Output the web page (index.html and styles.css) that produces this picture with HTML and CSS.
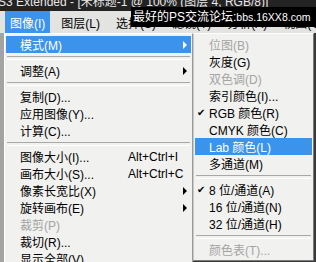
FILE: index.html
```html
<!DOCTYPE html>
<html lang="zh-CN">
<head>
    <meta charset="UTF-8">
    <title>图像 - 模式</title>
    <link rel="stylesheet" href="styles.css">
</head>
<body>
    <div class="titlebar">
        <span class="title-text">S3 Extended - [未标题-1 @ 100% (图层 4, RGB/8)]</span>
    </div>

    <div class="menubar">
        <span class="top-item active">图像(I)</span>
        <span class="top-item">图层(L)</span>
        <span class="top-item">选择(S)</span>
        <span class="top-item">滤镜(T)</span>
        <span class="top-item">分析(A)</span>
        <span class="top-item">视图(V)</span>
        <span class="top-item">窗口(W)</span>
    </div>

    <div class="watermark">最好的PS交流论坛:<span class="url">bbs.16XX8.com</span></div>

    <div class="workspace">
        <div class="gutter"></div>

        <div class="menu">
            <div class="item hover"><span class="label">模式(M)</span><span class="arrow"></span></div>
            <div class="sep"></div>
            <div class="item"><span class="label">调整(A)</span><span class="arrow"></span></div>
            <div class="sep"></div>
            <div class="item"><span class="label">复制(D)...</span></div>
            <div class="item"><span class="label">应用图像(Y)...</span></div>
            <div class="item"><span class="label">计算(C)...</span></div>
            <div class="sep"></div>
            <div class="item"><span class="label">图像大小(I)...</span><span class="key">Alt+Ctrl+I</span></div>
            <div class="item"><span class="label">画布大小(S)...</span><span class="key">Alt+Ctrl+C</span></div>
            <div class="item"><span class="label">像素长宽比(X)</span><span class="arrow"></span></div>
            <div class="item"><span class="label">旋转画布(E)</span><span class="arrow"></span></div>
            <div class="item disabled"><span class="label">裁剪(P)</span></div>
            <div class="item"><span class="label">裁切(R)...</span></div>
            <div class="item"><span class="label">显示全部(V)</span></div>
        </div>

        <div class="submenu">
            <div class="sub-item disabled"><span class="check"></span>位图(B)</div>
            <div class="sub-item"><span class="check"></span>灰度(G)</div>
            <div class="sub-item disabled"><span class="check"></span>双色调(D)</div>
            <div class="sub-item"><span class="check"></span>索引颜色(I)...</div>
            <div class="sub-item"><span class="check">✔</span>RGB 颜色(R)</div>
            <div class="sub-item"><span class="check"></span>CMYK 颜色(C)</div>
            <div class="sub-item hover"><span class="check"></span>Lab 颜色(L)</div>
            <div class="sub-item"><span class="check"></span>多通道(M)</div>
            <div class="sep"></div>
            <div class="sub-item"><span class="check">✔</span>8 位/通道(A)</div>
            <div class="sub-item"><span class="check"></span>16 位/通道(N)</div>
            <div class="sub-item"><span class="check"></span>32 位/通道(H)</div>
            <div class="sep"></div>
            <div class="sub-item disabled"><span class="check"></span>颜色表(T)...</div>
        </div>
    </div>
</body>
</html>
```

FILE: styles.css
```css
* {
    margin: 0;
    padding: 0;
    box-sizing: border-box;
}

body {
    width: 316px;
    height: 262px;
    overflow: hidden;
    position: relative;
    background: #3a3a3a;
    font-family: "Liberation Sans", "Noto Sans CJK SC", sans-serif;
    font-size: 12px;
    color: #000;
}

.titlebar {
    height: 11px;
    background: #232323;
    overflow: hidden;
    white-space: nowrap;
}

.title-text {
    display: block;
    margin-top: -6px;
    margin-left: -2px;
    line-height: 16px;
    color: #e8e8e8;
    font-size: 12px;
}

.menubar {
    height: 22px;
    background: #e3e3e1;
    display: flex;
    align-items: stretch;
    padding-left: 5px;
    white-space: nowrap;
    overflow: hidden;
}

.top-item {
    display: flex;
    align-items: center;
    padding: 0 5px;
    margin-right: 6px;
}

.top-item.active {
    background: #3b93ec;
    color: #fff;
}

/* forum watermark pasted over the screenshot */
.watermark {
    position: absolute;
    top: 7px;
    left: 131px;
    width: 190px;
    height: 20px;
    background: #000;
    color: #fff;
    font-size: 12px;
    line-height: 20px;
    padding-left: 2px;
    white-space: nowrap;
}

.watermark .url {
    font-size: 10.5px;
}

.workspace {
    display: flex;
    align-items: flex-start;
    height: 229px;
}

.gutter {
    width: 4px;
    height: 100%;
    background: #a3a3a3;
}

.menu {
    width: 189px;
    height: 240px;
    background: #f1f1ef;
    border: 1px solid;
    border-color: #ffffff #9a9a9a #9a9a9a #ffffff;
    padding: 2px 1px;
}

.item {
    height: 17px;
    display: flex;
    align-items: center;
    padding-left: 14px;
    padding-right: 4px;
    white-space: nowrap;
}

.label {
    width: 108px;
}

.key {
    flex: 1;
}

.arrow {
    margin-left: auto;
    width: 0;
    height: 0;
    border-left: 4px solid #000;
    border-top: 4px solid transparent;
    border-bottom: 4px solid transparent;
}

.hover {
    background: #3b93ec;
    color: #fff;
}

.hover .arrow {
    border-left-color: #fff;
}

.disabled {
    color: #a4a4a4;
}

.sep {
    height: 9px;
    display: flex;
    align-items: center;
    padding: 0 1px;
}

.sep::before {
    content: "";
    flex: 1;
    height: 2px;
    border-top: 1px solid #a8a8a8;
    border-bottom: 1px solid #ffffff;
}

.submenu {
    width: 121px;
    background: #f1f1ef;
    border: 1px solid;
    border-color: #ffffff #7a7a7a #7a7a7a #c8c8c8;
    padding: 2px 1px;
}

.sub-item {
    height: 17px;
    display: flex;
    align-items: center;
    padding-left: 2px;
    white-space: nowrap;
}

.check {
    width: 12px;
    font-size: 10px;
    font-family: "DejaVu Sans", sans-serif;
}
```
